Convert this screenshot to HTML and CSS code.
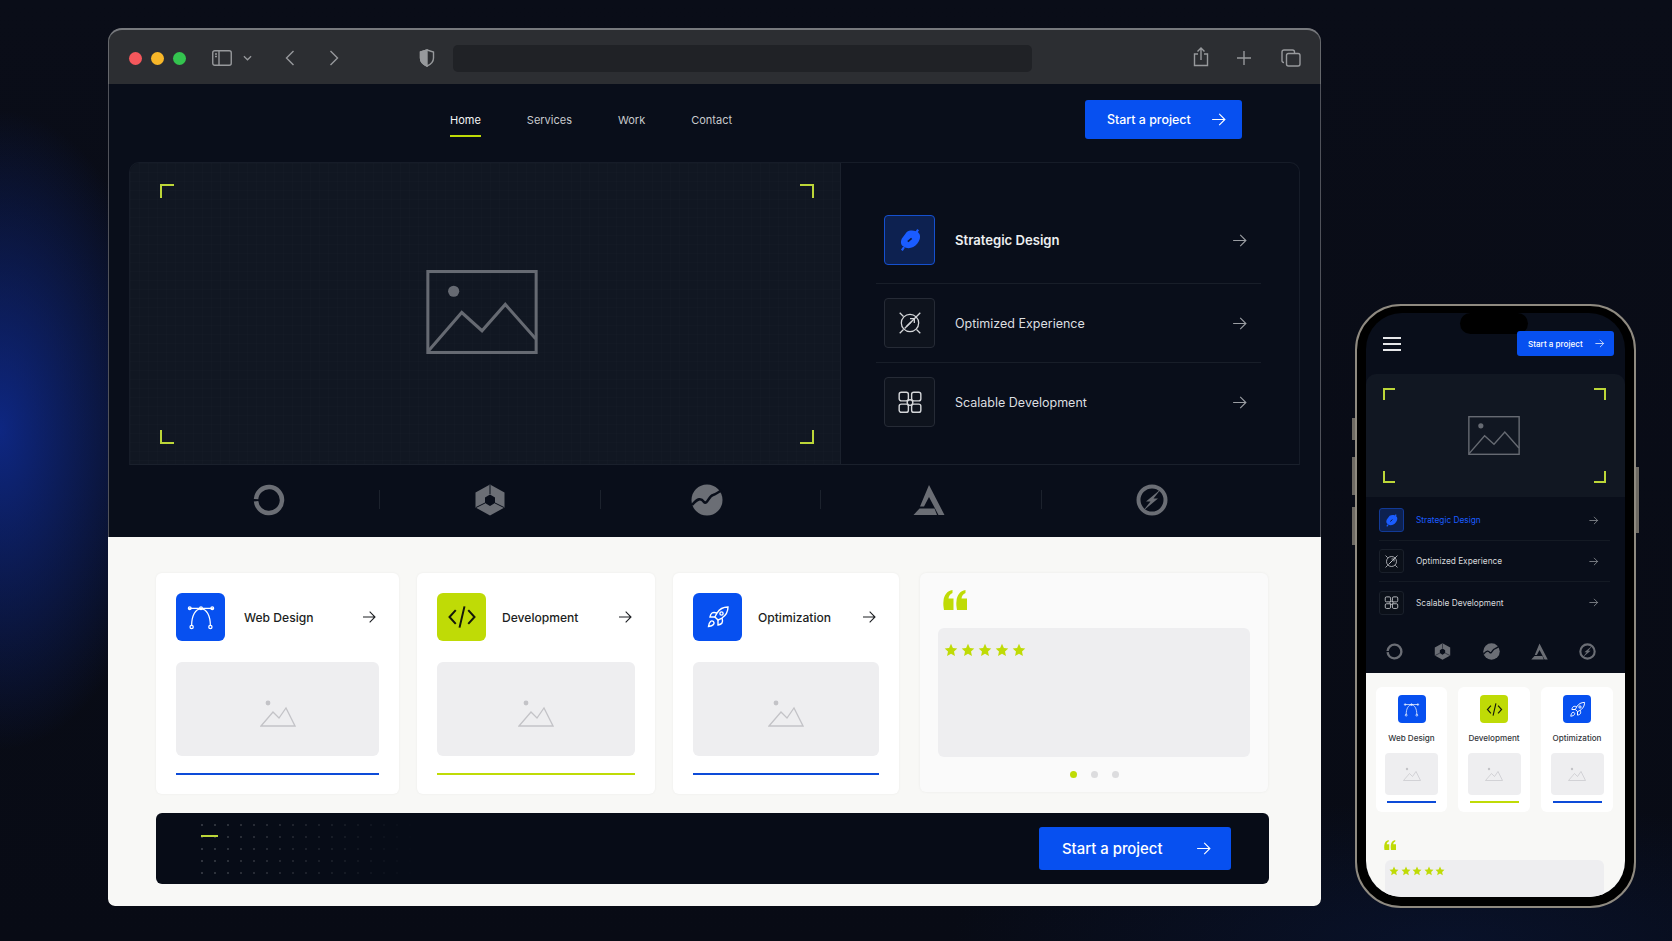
FILE: index.html
```html
<!DOCTYPE html>
<html lang="en">
<head>
    <meta charset="UTF-8">
    <meta name="viewport" content="width=device-width, initial-scale=1.0">
    <title>Start a project</title>
    <link rel="stylesheet" href="styles.css">
</head>
<body>
    <!-- shared icons -->
    <svg class="sprite" aria-hidden="true">
        <symbol id="i-arrow" viewBox="0 0 24 24"><path d="M3 12h18M13 4l8 8-8 8" fill="none" stroke="currentColor" stroke-width="1.6"/></symbol>
        <symbol id="i-photo" viewBox="0 0 110 83"><rect x="1.5" y="1.5" width="107" height="80" fill="none" stroke="currentColor" stroke-width="3"/><circle cx="27" cy="21" r="5.5" fill="currentColor"/><path d="M2 80L35 42l20 18 23-26 30 34" fill="none" stroke="currentColor" stroke-width="3"/></symbol>
        <symbol id="i-thumb" viewBox="0 0 36 28"><circle cx="8" cy="4" r="2.4" fill="currentColor"/><path d="M1 27l12-14 6 6 7-10 9 18z" fill="none" stroke="currentColor" stroke-width="1.3"/></symbol>
        <symbol id="i-strategy" viewBox="0 0 24 24"><path d="M19.5 2.5l-2 3M4.5 21.5l2-3" stroke="currentColor" stroke-width="2" fill="none"/><path d="M9 4.5c2.5-1.500 6-1.500 8.500-.5 3 1 4.500 3.500 3.500 7-.8 3-3 5.500-6 7.500-3 1.500-6.500 1.500-9-.5-2.500-1.500-3-4.500-1.500-7.500z" fill="currentColor"/><path d="M10 13.500l3.500-3" stroke="#0b1a3f" stroke-width="1.6"/></symbol>
        <symbol id="i-optimize" viewBox="0 0 24 24"><g fill="none" stroke="currentColor" stroke-width="1.2"><circle cx="12" cy="12" r="8"/><path d="M2.500 2.500l3.500 3.500M21.500 2.500L7 17M2.500 21.500L6 18M21.500 21.500L18 18"/><path d="M12 8h4v4M9 15l4-4"/></g></symbol>
        <symbol id="i-scale" viewBox="0 0 24 24"><g fill="none" stroke="currentColor" stroke-width="1.3"><rect x="2" y="3" width="8.500" height="8" rx="2"/><rect x="13.500" y="3" width="8.500" height="8" rx="2"/><rect x="2" y="14" width="8.500" height="7.500" rx="2"/><rect x="13.500" y="14" width="8.500" height="7.500" rx="2"/><circle cx="12" cy="12.500" r="2.600"/></g></symbol>
        <symbol id="i-bezier" viewBox="0 0 24 24"><g fill="none" stroke="currentColor" stroke-width="1"><path d="M4.500 19C4.500 11 7.500 5.500 12 5.500s7.500 5.500 7.500 13.500M2.500 5h19"/><circle cx="4.500" cy="20" r="1.300"/><circle cx="19.500" cy="20" r="1.300"/><circle cx="3" cy="5" r="1.100"/><circle cx="21" cy="5" r="1.100"/><circle cx="12" cy="5" r="1.100"/></g></symbol>
        <symbol id="i-code" viewBox="0 0 24 24"><path d="M7 6.500L2 12l5 5.500M17 6.500l5 5.500-5 5.500M14 3.500L10 20.500" fill="none" stroke="currentColor" stroke-width="1.6"/></symbol>
        <symbol id="i-rocket" viewBox="0 0 24 24"><g fill="none" stroke="currentColor" stroke-width="1.4"><path d="M4.500 16.500c-1.500 1.260-2 5-2 5s3.740-.5 5-2c.71-.84.7-2.130-.09-2.910a2.180 2.180 0 0 0-2.910-.09z"/><path d="M12 15l-3-3a22 22 0 0 1 2-3.950A12.880 12.880 0 0 1 22 2c0 2.720-.78 7.500-6 11a22.350 22.350 0 0 1-4 2z"/><path d="M9 12H4s.55-3.030 2-4c1.620-1.080 5 0 5 0M12 15v5s3.030-.55 4-2c1.080-1.620 0-5 0-5"/><circle cx="15.500" cy="8.500" r="1.600"/></g></symbol>
        <symbol id="i-star" viewBox="0 0 20 20"><path d="M10 1l2.700 6 6.300.7-4.700 4.300 1.300 6.500L10 15.200 4.400 18.500 5.700 12 1 7.700 7.300 7z" fill="currentColor"/></symbol>
        <symbol id="i-quote" viewBox="0 0 24 20"><path d="M1 20c-.5-3-1-6-.5-9C1 5 4 1 9.500 0v3C7 4 5.800 6 5.500 8.500H10.500V20zM14 20c-.5-3-1-6-.5-9 .5-6 3.500-10 9-11v3c-2.500 1-3.700 3-4 5.500H24V20z" fill="currentColor"/></symbol>
        <symbol id="l-ring" viewBox="0 0 32 32"><circle cx="16" cy="16" r="13" fill="none" stroke="currentColor" stroke-width="4.5" stroke-dasharray="79 2.7" transform="rotate(184 16 16)"/></symbol>
        <symbol id="l-hex" viewBox="0 0 32 32"><path d="M16 .5l14.500 8v15L16 31.500 1.500 23.500v-15zM16 10.500l-5 3v5.500l5 3 5-3v-5.500z" fill="currentColor" fill-rule="evenodd"/><path d="M16 1v9M2 23.500l9-4.500M30 23.500l-9-4.500" stroke="#090e1a" stroke-width="1"/></symbol>
        <symbol id="l-wave" viewBox="0 0 32 32"><circle cx="16" cy="16" r="15.500" fill="currentColor"/><path d="M1 21C7 14 10 14 13 18c3 3 5-6 9-7 3-1 6-3 9-5" fill="none" stroke="#090e1a" stroke-width="2.6"/></symbol>
        <symbol id="l-delta" viewBox="0 0 32 32"><path d="M16 1l15.500 30h-6L16 13l-5 9.500H7z" fill="currentColor"/><path d="M6.500 24.500h15l2.500 6.500H.5z" fill="currentColor"/></symbol>
        <symbol id="l-bolt" viewBox="0 0 32 32"><circle cx="16" cy="16" r="13.500" fill="none" stroke="currentColor" stroke-width="4"/><path d="M25 5l-7.500 9.500H22L7 27l7.500-9.500H10z" fill="currentColor"/></symbol>
    </svg>

    <main class="browser">
        <header class="toolbar">
            <span class="light light-red"></span>
            <span class="light light-yellow"></span>
            <span class="light light-green"></span>
            <svg class="tool tool-sidebar" viewBox="0 0 20 16"><rect x=".75" y=".75" width="18.5" height="14.5" rx="2"/><path d="M7 1v14M3 4h2M3 6.500h2"/></svg>
            <svg class="tool tool-caret" viewBox="0 0 10 6"><path d="M1 1l4 4 4-4"/></svg>
            <svg class="tool tool-back" viewBox="0 0 10 16"><path d="M8.500 1L1.500 8l7 7"/></svg>
            <svg class="tool tool-forward" viewBox="0 0 10 16"><path d="M1.500 1l7 7-7 7"/></svg>
            <svg class="tool tool-shield" viewBox="0 0 16 18"><path d="M8 1l6.500 2v6c0 4-3 6.500-6.500 8-3.500-1.500-6.500-4-6.500-8V3z"/><path class="tool-fill" d="M8 1v16c-3.500-1.500-6.500-4-6.500-8V3z"/></svg>
            <div class="url-bar"></div>
            <svg class="tool tool-share" viewBox="0 0 16 20"><path d="M5 7H1.500v11.500h13V7H11M8 13V1.500M4.500 4.500L8 1l3.500 3.500"/></svg>
            <svg class="tool tool-plus" viewBox="0 0 16 16"><path d="M8 1v14M1 8h14"/></svg>
            <svg class="tool tool-tabs" viewBox="0 0 20 18"><rect x="5.500" y="4.500" width="13.500" height="12.500" rx="2"/><path d="M3 13.500H2.800A1.800 1.800 0 0 1 1 11.700V3a2 2 0 0 1 2-2h8.500A2 2 0 0 1 13.500 3v1"/></svg>
        </header>

        <section class="dark-page">
            <nav class="site-nav">
                <a class="nav-link active">Home</a>
                <a class="nav-link">Services</a>
                <a class="nav-link">Work</a>
                <a class="nav-link">Contact</a>
                <a class="cta cta-small">Start a project <svg class="cta-arrow"><use href="#i-arrow"/></svg></a>
            </nav>

            <div class="hero">
                <div class="hero-media">
                    <i class="corner corner-tl"></i><i class="corner corner-tr"></i>
                    <i class="corner corner-bl"></i><i class="corner corner-br"></i>
                    <svg class="hero-photo"><use href="#i-photo"/></svg>
                </div>
                <ul class="feature-list">
                    <li class="feature feature-active">
                        <span class="feature-icon"><svg><use href="#i-strategy"/></svg></span>
                        <span class="feature-name">Strategic Design</span>
                        <svg class="feature-arrow"><use href="#i-arrow"/></svg>
                    </li>
                    <li class="feature">
                        <span class="feature-icon"><svg><use href="#i-optimize"/></svg></span>
                        <span class="feature-name">Optimized Experience</span>
                        <svg class="feature-arrow"><use href="#i-arrow"/></svg>
                    </li>
                    <li class="feature">
                        <span class="feature-icon"><svg><use href="#i-scale"/></svg></span>
                        <span class="feature-name">Scalable Development</span>
                        <svg class="feature-arrow"><use href="#i-arrow"/></svg>
                    </li>
                </ul>
            </div>

            <div class="logo-strip">
                <svg class="logo"><use href="#l-ring"/></svg><i class="logo-sep"></i>
                <svg class="logo"><use href="#l-hex"/></svg><i class="logo-sep"></i>
                <svg class="logo logo-wave"><use href="#l-wave"/></svg><i class="logo-sep"></i>
                <svg class="logo logo-delta"><use href="#l-delta"/></svg><i class="logo-sep"></i>
                <svg class="logo"><use href="#l-bolt"/></svg>
            </div>
        </section>

        <section class="light-page">
            <div class="cards">
                <article class="card">
                    <div class="card-head">
                        <span class="card-icon icon-blue"><svg><use href="#i-bezier"/></svg></span>
                        <h3 class="card-title card-title-wide">Web Design</h3>
                        <svg class="card-arrow"><use href="#i-arrow"/></svg>
                    </div>
                    <div class="thumb"><svg><use href="#i-thumb"/></svg></div>
                    <div class="card-line"></div>
                </article>
                <article class="card">
                    <div class="card-head">
                        <span class="card-icon icon-lime"><svg><use href="#i-code"/></svg></span>
                        <h3 class="card-title">Development</h3>
                        <svg class="card-arrow"><use href="#i-arrow"/></svg>
                    </div>
                    <div class="thumb"><svg><use href="#i-thumb"/></svg></div>
                    <div class="card-line line-lime"></div>
                </article>
                <article class="card">
                    <div class="card-head">
                        <span class="card-icon icon-blue icon-rocket"><svg><use href="#i-rocket"/></svg></span>
                        <h3 class="card-title">Optimization</h3>
                        <svg class="card-arrow"><use href="#i-arrow"/></svg>
                    </div>
                    <div class="thumb"><svg><use href="#i-thumb"/></svg></div>
                    <div class="card-line"></div>
                </article>
                <article class="quote-card">
                    <svg class="quote-mark"><use href="#i-quote"/></svg>
                    <div class="quote-body">
                        <div class="stars">
                            <svg><use href="#i-star"/></svg><svg><use href="#i-star"/></svg><svg><use href="#i-star"/></svg><svg><use href="#i-star"/></svg><svg><use href="#i-star"/></svg>
                        </div>
                    </div>
                    <div class="dots"><i class="dot dot-on"></i><i class="dot"></i><i class="dot"></i></div>
                </article>
            </div>

            <div class="cta-bar">
                <div class="dot-field"></div>
                <i class="dash"></i>
                <a class="cta cta-large">Start a project <svg class="cta-arrow"><use href="#i-arrow"/></svg></a>
            </div>
        </section>
    </main>

    <aside class="phone">
        <i class="side-btn side-a"></i><i class="side-btn side-b"></i><i class="side-btn side-c"></i><i class="side-btn side-d"></i>
        <div class="screen">
            <span class="island"></span>
            <div class="m-head">
                <span class="burger"><i></i><i></i><i></i></span>
                <a class="cta cta-mini">Start a project <svg class="cta-arrow"><use href="#i-arrow"/></svg></a>
            </div>
            <div class="m-hero">
                <i class="corner m-corner corner-tl"></i><i class="corner m-corner corner-tr"></i>
                <i class="corner m-corner corner-bl"></i><i class="corner m-corner corner-br"></i>
                <svg class="m-photo"><use href="#i-photo"/></svg>
            </div>
            <ul class="m-list">
                <li class="m-row m-row-active">
                    <span class="m-icon"><svg><use href="#i-strategy"/></svg></span>
                    <span class="m-name">Strategic Design</span>
                    <svg class="m-arrow"><use href="#i-arrow"/></svg>
                </li>
                <li class="m-row">
                    <span class="m-icon"><svg><use href="#i-optimize"/></svg></span>
                    <span class="m-name">Optimized Experience</span>
                    <svg class="m-arrow"><use href="#i-arrow"/></svg>
                </li>
                <li class="m-row">
                    <span class="m-icon"><svg><use href="#i-scale"/></svg></span>
                    <span class="m-name">Scalable Development</span>
                    <svg class="m-arrow"><use href="#i-arrow"/></svg>
                </li>
            </ul>
            <div class="m-logos">
                <svg><use href="#l-ring"/></svg>
                <svg><use href="#l-hex"/></svg>
                <svg><use href="#l-wave"/></svg>
                <svg><use href="#l-delta"/></svg>
                <svg><use href="#l-bolt"/></svg>
            </div>
            <div class="m-light">
                <div class="m-cards">
                    <article class="m-card">
                        <span class="m-card-icon icon-blue"><svg><use href="#i-bezier"/></svg></span>
                        <h3 class="m-card-title">Web Design</h3>
                        <div class="m-thumb"><svg><use href="#i-thumb"/></svg></div>
                        <div class="m-line"></div>
                    </article>
                    <article class="m-card">
                        <span class="m-card-icon icon-lime"><svg><use href="#i-code"/></svg></span>
                        <h3 class="m-card-title">Development</h3>
                        <div class="m-thumb"><svg><use href="#i-thumb"/></svg></div>
                        <div class="m-line m-line-lime"></div>
                    </article>
                    <article class="m-card">
                        <span class="m-card-icon icon-blue"><svg><use href="#i-rocket"/></svg></span>
                        <h3 class="m-card-title">Optimization</h3>
                        <div class="m-thumb"><svg><use href="#i-thumb"/></svg></div>
                        <div class="m-line"></div>
                    </article>
                </div>
                <svg class="m-quote"><use href="#i-quote"/></svg>
                <div class="m-quote-body">
                    <div class="m-stars">
                        <svg><use href="#i-star"/></svg><svg><use href="#i-star"/></svg><svg><use href="#i-star"/></svg><svg><use href="#i-star"/></svg><svg><use href="#i-star"/></svg>
                    </div>
                </div>
            </div>
        </div>
    </aside>
</body>
</html>
```

FILE: styles.css
```css
* {
    box-sizing: border-box;
}
html, body {
    height: 100%;
}
body {
    margin: 0;
    position: relative;
    overflow: hidden;
    font-family: Inter, "Liberation Sans", sans-serif;
    background-color: #090c16;
    background-image:
        radial-gradient(ellipse 170px 320px at 0 430px, rgba(16, 50, 175, 0.7), rgba(16, 50, 175, 0) 100%),
        radial-gradient(ellipse 500px 140px at 1450px 941px, rgba(10, 30, 80, 0.35), rgba(10, 30, 80, 0) 100%),
        linear-gradient(180deg, #0a0d18, #080b15);
}
ul {
    list-style: none;
    margin: 0;
    padding: 0;
}
h3 {
    margin: 0;
    font-weight: 400;
}
i {
    display: block;
}
.sprite {
    display: none;
}

/* browser window */
.browser {
    position: absolute;
    left: 108px;
    top: 28px;
    width: 1213px;
    height: 878px;
    display: flex;
    flex-direction: column;
    overflow: hidden;
    border-radius: 14px 14px 7px 7px;
    box-shadow: inset 0 0 0 1px #5b5d62;
}
.toolbar {
    flex: 0 0 56px;
    display: flex;
    align-items: center;
    padding: 2px 0 0 11px;
    background-color: #2c2e32;
    border-top: 2px solid #77797d;
    border-left: 1px solid #66686c;
    border-right: 1px solid #66686c;
    border-radius: 14px 14px 0 0;
}
.light {
    width: 13px;
    height: 13px;
    border-radius: 50%;
    margin-left: 9px;
}
.light-red { background-color: #f4575c; }
.light-yellow { background-color: #f8b729; }
.light-green { background-color: #34c44f; }
.tool {
    fill: none;
    stroke: #97999c;
    stroke-width: 1.4;
}
.tool-fill {
    fill: #97999c;
}
.tool-sidebar { width: 20px; height: 16px; margin-left: 26px; }
.tool-caret { width: 9px; height: 6px; margin-left: 11px; }
.tool-back { width: 10px; height: 16px; margin-left: 33px; }
.tool-forward { width: 10px; height: 16px; margin-left: 34px; }
.tool-shield { width: 16px; height: 18px; margin-left: 80px; }
.tool-share { width: 16px; height: 20px; margin-left: 161px; margin-top: -3px; }
.tool-plus { width: 16px; height: 16px; margin-left: 27px; }
.tool-tabs { width: 20px; height: 18px; margin-left: 29px; }
.url-bar {
    width: 579px;
    height: 27px;
    margin-left: 18px;
    background-color: #202226;
    border-radius: 5px;
}

/* dark top half */
.dark-page {
    flex: 0 0 453px;
    display: flex;
    flex-direction: column;
    background-color: #090e1a;
    border-left: 1px solid #50525a;
    border-right: 1px solid #50525a;
}
.site-nav {
    flex: 0 0 78px;
    display: flex;
    align-items: center;
    padding: 0 78px 7px 341px;
}
.nav-link {
    position: relative;
    margin-right: 46px;
    font-size: 11px;
    color: #c8cacd;
}
.nav-link.active {
    color: #f4f5f5;
}
.nav-link.active::after {
    content: "";
    position: absolute;
    left: 0;
    right: 0;
    bottom: -10px;
    height: 2px;
    background-color: #bfdb06;
}
.cta {
    display: flex;
    align-items: center;
    justify-content: space-between;
    color: #fff;
    font-weight: 500;
    background-color: #0750f0;
    border-radius: 3px;
    white-space: nowrap;
}
.cta-small {
    width: 157px;
    height: 39px;
    margin-left: auto;
    padding: 0 15px 0 22px;
    font-size: 12.4px;
}
.cta-arrow {
    width: 17px;
    height: 17px;
}
.hero {
    flex: 0 0 303px;
    display: grid;
    grid-template-columns: 711px 1fr;
    margin: 0 20px;
    border: 1px solid #161c28;
    border-bottom: 1px solid #1a202c;
    border-radius: 10px 10px 0 0;
    overflow: hidden;
}
.hero-media {
    position: relative;
    display: flex;
    align-items: center;
    justify-content: center;
    border-right: 1px solid #1b212d;
    background-color: #111722;
    background-image:
        linear-gradient(rgba(255, 255, 255, 0.007) 1px, transparent 1px),
        linear-gradient(90deg, rgba(255, 255, 255, 0.008) 1px, transparent 1px);
    background-size: 9px 9px;
}
.hero-photo {
    width: 112px;
    height: 84px;
    margin: -4px 0 0 -6px;
    color: #666a72;
}
.corner {
    position: absolute;
    width: 14px;
    height: 14px;
    border: 0 solid #bcd638;
}
.corner-tl { left: 30px; top: 21px; border-width: 2px 0 0 2px; }
.corner-tr { right: 26px; top: 21px; border-width: 2px 2px 0 0; }
.corner-bl { left: 30px; bottom: 20px; border-width: 0 0 2px 2px; }
.corner-br { right: 26px; bottom: 20px; border-width: 0 2px 2px 0; }
.feature-list {
    padding: 37px 38px 0 35px;
}
.feature {
    display: flex;
    align-items: center;
    padding: 14px 13px 14px 8px;
    border-bottom: 1px solid #181e29;
}
.feature:first-child {
    padding-top: 15px;
    padding-bottom: 18px;
}
.feature:last-child {
    border-bottom: 0;
}
.feature-icon {
    flex: 0 0 51px;
    height: 50px;
    display: flex;
    align-items: center;
    justify-content: center;
    color: #d4d6d9;
    background-color: #0e131d;
    border: 1px solid #262b36;
    border-radius: 4px;
}
.feature-icon svg {
    width: 26px;
    height: 26px;
}
.feature-active .feature-icon {
    color: #1a5cff;
    background-color: #0d2150;
    border-color: #1550cf;
}
.feature-name {
    flex: 1;
    margin-left: 20px;
    font-size: 12.5px;
    color: #dcdee0;
}
.feature-active .feature-name {
    font-size: 13.1px;
    color: #eef0f1;
    font-weight: 600;
}
.feature-arrow {
    width: 17px;
    height: 17px;
    color: #9a9da2;
}
.logo-strip {
    flex: 1;
    display: flex;
    align-items: center;
    justify-content: space-between;
    padding: 0 152px 3px 144px;
}
.logo {
    width: 32px;
    height: 32px;
    color: #6b6e75;
}
.logo-wave {
    margin: 0 4px 0 -4px;
}
.logo-delta {
    margin: 0 2px 0 -2px;
}
.logo-sep {
    width: 1px;
    height: 19px;
    background-color: #1c222d;
}

/* light bottom half */
.light-page {
    flex: 1;
    padding: 36px 52px 0 48px;
    background-color: #f8f8f6;
    border-radius: 0 0 7px 7px;
}
.cards {
    display: grid;
    grid-template-columns: 243px 238px 226px 351px;
    column-gap: 18px;
}
.card {
    height: 221px;
    padding: 20px 20px 0;
    background-color: #fff;
    border-radius: 6px;
    box-shadow: 0 0 3px rgba(0, 0, 0, 0.05);
}
.card-head {
    display: flex;
    align-items: center;
    height: 48px;
    margin-bottom: 21px;
}
.card-icon {
    flex: 0 0 49px;
    height: 48px;
    display: flex;
    align-items: center;
    justify-content: center;
    border-radius: 6px;
}
.card-icon svg {
    width: 30px;
    height: 30px;
}
.card-icon.icon-rocket svg {
    width: 24px;
    height: 24px;
}
.icon-blue {
    color: #fff;
    background-color: #0750f0;
}
.icon-lime {
    color: #14180a;
    background-color: #bfdb06;
}
.card-title {
    flex: 1;
    margin-left: 16px;
    font-size: 12.1px;
    font-weight: 500;
    color: #1c1e22;
}
.card-title-wide {
    margin-left: 19px;
}
.card-arrow {
    width: 16px;
    height: 16px;
    margin-right: 2px;
    color: #1c1e22;
}
.thumb {
    height: 94px;
    display: flex;
    align-items: center;
    justify-content: center;
    background-color: #eeeef0;
    border-radius: 6px;
}
.thumb svg {
    width: 36px;
    height: 28px;
    margin-top: 8px;
    color: #c3c3c7;
}
.card-line {
    height: 2px;
    margin-top: 17px;
    background-color: #0d4bd8;
}
.line-lime {
    background-color: #bfdb06;
}
.quote-card {
    margin-left: 3px;
    height: 219px;
    padding: 17px 18px 0 18px;
    background-color: #fafafa;
    border-radius: 6px;
    box-shadow: 0 0 3px rgba(0, 0, 0, 0.06);
}
.quote-mark {
    display: block;
    width: 24px;
    height: 20px;
    margin-left: 5px;
    color: #bfdb06;
}
.quote-body {
    height: 129px;
    margin-top: 18px;
    padding: 15px 6px;
    background-color: #eeeef0;
    border-radius: 6px;
}
.stars {
    display: flex;
    gap: 3px;
}
.stars svg {
    width: 14px;
    height: 14px;
    color: #bfdb06;
}
.dots {
    display: flex;
    justify-content: center;
    gap: 14px;
    margin-top: 14px;
}
.dot {
    width: 7px;
    height: 7px;
    border-radius: 50%;
    background-color: #dcdcde;
}
.dot-on {
    background-color: #bfdb06;
}
.cta-bar {
    position: relative;
    display: flex;
    align-items: center;
    justify-content: flex-end;
    height: 71px;
    margin-top: 19px;
    padding-right: 38px;
    background-color: #070c17;
    border-radius: 6px;
}
.dot-field {
    position: absolute;
    left: 45px;
    top: 11px;
    width: 220px;
    height: 56px;
    background-image: radial-gradient(circle at 1px 1px, rgba(255, 255, 255, 0.17) 0.8px, transparent 1px);
    background-size: 13px 12px;
    -webkit-mask-image: linear-gradient(90deg, #000, transparent);
    mask-image: linear-gradient(90deg, #000, transparent);
}
.dash {
    position: absolute;
    left: 45px;
    top: 22px;
    width: 17px;
    height: 2px;
    background-color: #bcd638;
}
.cta-large {
    width: 192px;
    height: 43px;
    padding: 0 19px 0 23px;
    font-size: 14.9px;
}

/* phone */
.phone {
    position: absolute;
    left: 1355px;
    top: 304px;
    width: 281px;
    height: 604px;
    padding: 7px 9px 9px;
    background-color: #000;
    border: 2px solid #8f8a80;
    border-radius: 46px;
}
.side-btn {
    position: absolute;
    width: 3px;
    background-color: #6e6a63;
}
.side-a { left: -5px; top: 112px; height: 22px; }
.side-b { left: -5px; top: 151px; height: 38px; }
.side-c { left: -5px; top: 201px; height: 38px; }
.side-d { right: -5px; top: 161px; height: 66px; }
.screen {
    position: relative;
    height: 100%;
    display: flex;
    flex-direction: column;
    overflow: hidden;
    background-color: #090e1a;
    border-radius: 36px;
}
.island {
    position: absolute;
    left: 94px;
    top: 0;
    width: 68px;
    height: 21px;
    background-color: #000;
    border-radius: 11px;
}
.m-head {
    flex: 0 0 61px;
    display: flex;
    align-items: center;
    justify-content: space-between;
    padding: 0 11px 0 17px;
}
.burger {
    display: flex;
    flex-direction: column;
    gap: 4px;
}
.burger i {
    width: 18px;
    height: 2px;
    background-color: #e6e7e9;
}
.cta-mini {
    width: 97px;
    height: 25px;
    padding: 0 9px 0 11px;
    font-size: 8.1px;
    position: relative;
    z-index: 1;
}
.cta-mini .cta-arrow {
    width: 11px;
    height: 11px;
}
.m-hero {
    position: relative;
    flex: 0 0 123px;
    display: flex;
    align-items: center;
    justify-content: center;
    background-color: #111722;
    border-radius: 10px 10px 0 0;
}
.m-photo {
    width: 52px;
    height: 39px;
    margin-left: -3px;
    color: #666a72;
}
.m-corner { width: 12px; height: 12px; }
.m-corner.corner-tl { left: 17px; top: 14px; }
.m-corner.corner-tr { right: 19px; top: 14px; }
.m-corner.corner-bl { left: 17px; bottom: 14px; }
.m-corner.corner-br { right: 19px; bottom: 14px; }
.m-list {
    flex: 0 0 133px;
    padding: 3px 15px 0 13px;
}
.m-row {
    display: flex;
    align-items: center;
    height: 41px;
    padding-right: 11px;
    border-bottom: 1px solid #141a24;
}
.m-row:last-child {
    border-bottom: 0;
}
.m-icon {
    flex: 0 0 25px;
    height: 24px;
    display: flex;
    align-items: center;
    justify-content: center;
    color: #d4d6d9;
    background-color: #0b1019;
    border: 1px solid #1a202b;
    border-radius: 3px;
}
.m-icon svg {
    width: 15px;
    height: 15px;
}
.m-name {
    flex: 1;
    margin-left: 12px;
    font-size: 8.3px;
    color: #d8dadd;
}
.m-arrow {
    width: 11px;
    height: 11px;
    color: #9a9da2;
}
.m-row-active .m-icon {
    color: #1a5cff;
    background-color: #0d2150;
    border-color: #123a96;
}
.m-row-active .m-name {
    color: #1a5cff;
}
.m-logos {
    flex: 0 0 43px;
    display: flex;
    align-items: center;
    justify-content: space-between;
    padding: 0 29px 0 20px;
    color: #6b6e75;
}
.m-logos svg {
    width: 17px;
    height: 17px;
}
.m-light {
    flex: 1;
    overflow: hidden;
    padding: 14px 12px 0 10px;
    background-color: #f8f8f6;
}
.m-cards {
    display: grid;
    grid-template-columns: 71px 72px 72px;
    column-gap: 11px;
}
.m-card {
    height: 125px;
    display: flex;
    flex-direction: column;
    align-items: center;
    padding-top: 8px;
    background-color: #fff;
    border-radius: 6px;
}
.m-card-icon {
    width: 28px;
    height: 28px;
    flex: 0 0 28px;
    display: flex;
    align-items: center;
    justify-content: center;
    border-radius: 4px;
}
.m-card-icon svg {
    width: 17px;
    height: 17px;
}
.m-card-title {
    margin-top: 9px;
    font-size: 8.1px;
    font-weight: 500;
    line-height: 12px;
    color: #33363b;
    white-space: nowrap;
}
.m-thumb {
    width: 53px;
    height: 42px;
    margin-top: 9px;
    display: flex;
    align-items: center;
    justify-content: center;
    background-color: #eeeef0;
    border-radius: 4px;
}
.m-thumb svg {
    width: 18px;
    height: 14px;
    color: #c3c3c7;
}
.m-line {
    width: 49px;
    height: 2px;
    margin-top: 6px;
    background-color: #0d4bd8;
}
.m-line-lime {
    background-color: #bfdb06;
}
.m-quote {
    display: block;
    width: 12px;
    height: 10px;
    margin: 28px 0 0 8px;
    color: #bfdb06;
}
.m-quote-body {
    height: 60px;
    margin: 10px 9px 0;
    padding: 6px 4px;
    background-color: #eeeef0;
    border-radius: 6px;
}
.m-stars {
    display: flex;
    gap: 1.5px;
}
.m-stars svg {
    width: 10px;
    height: 10px;
    color: #bfdb06;
}
```
